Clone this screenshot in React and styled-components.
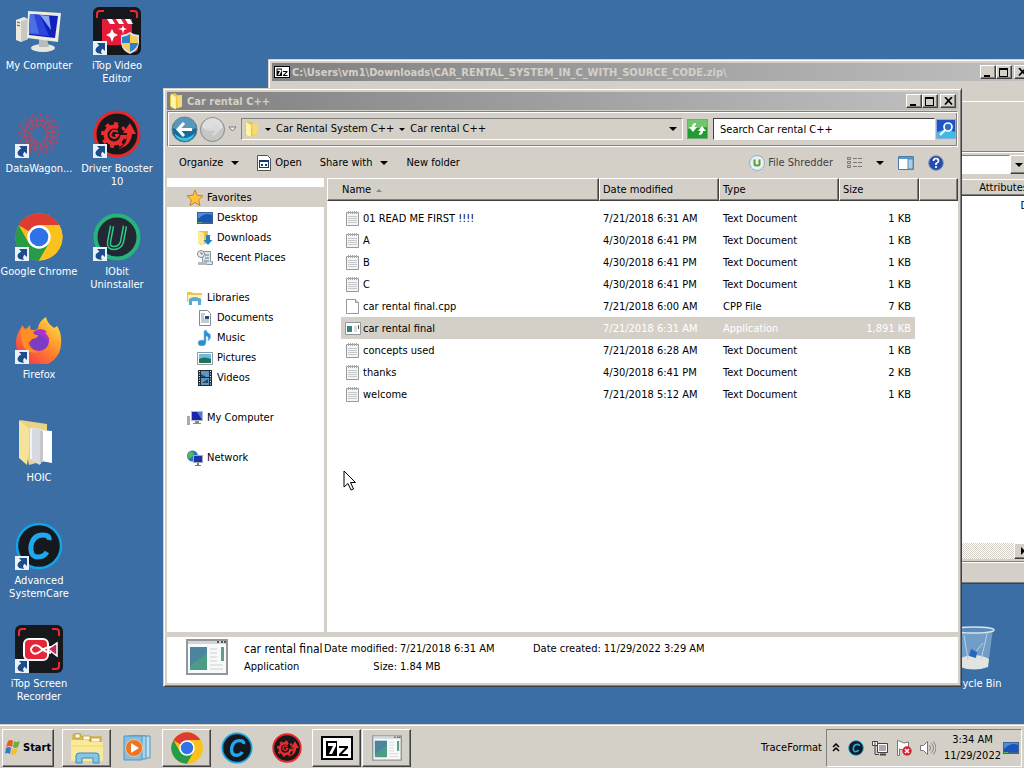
import React, { useState } from 'react';
import styled, { createGlobalStyle, css } from 'styled-components';

const GlobalStyle = createGlobalStyle`
    * {
        box-sizing: border-box;
    }
    body {
        margin: 0;
        overflow: hidden;
        font-family: "DejaVu Sans Condensed", "DejaVu Sans", sans-serif;
        font-size: 11px;
        line-height: 14px;
        color: #000;
    }
    button, input {
        font: inherit;
        color: inherit;
    }
    svg {
        display: block;
        flex: none;
    }
`;

const raised = css`
    border: 1px solid;
    border-color: #fff #404040 #404040 #fff;
    box-shadow: inset -1px -1px #808080;
`;
const sunken = css`
    border: 1px solid;
    border-color: #808080 #fff #fff #808080;
`;

const Screen = styled.div`
    display: flex;
    flex-direction: column;
    height: 100vh;
    background: #3a6ea5;
`;
const Desktop = styled.main`
    position: relative;
    flex: 1;
    min-height: 0;
    display: flex;
    justify-content: space-between;
    overflow: hidden;
`;
const Shortcuts = styled.div`
    display: grid;
    grid-auto-flow: column;
    grid-template-rows: repeat(7, 103px);
    grid-auto-columns: 78px;
    padding-top: 7px;
`;
const BinSlot = styled.div`
    width: 78px;
    margin: 625px 12px 0 0;
`;
const ShortcutButton = styled.button`
    display: flex;
    flex-direction: column;
    align-items: center;
    gap: 4px;
    width: 100%;
    padding: 0;
    border: none;
    background: none;
    color: #fff;
    line-height: 13px;
    white-space: pre-line;
`;
const IconBox = styled.span`
    position: relative;
    display: block;
`;
const ArrowBadge = styled.span`
    position: absolute;
    left: 0;
    bottom: 0;
`;

/* windows */
const Window = styled.section`
    position: absolute;
    display: flex;
    flex-direction: column;
    padding: 3px;
    background: #d4d0c8;
    border: 1px solid;
    border-color: #d4d0c8 #404040 #404040 #d4d0c8;
    box-shadow: inset 1px 1px #fff, inset -1px -1px #808080;
`;
const ArchiveWindow = styled(Window)`
    left: 268px;
    right: -12px;
    top: 59px;
    bottom: 140px;
`;
const ExplorerWindow = styled(Window)`
    left: 163px;
    right: 62px;
    top: 88px;
    bottom: 37px;
`;
const TitleBar = styled.header`
    display: flex;
    align-items: center;
    gap: 2px;
    height: 18px;
    padding: 0 2px;
    background: linear-gradient(90deg, #808080, #c0c0c0);
    color: #d4d0c8;
    font-weight: 700;
    white-space: nowrap;
`;
const Title = styled.h1`
    flex: 1;
    margin: 0;
    padding-top: 1px;
    font-size: 11px;
`;
const Caption = styled.button`
    display: grid;
    place-items: center;
    width: 16px;
    height: 14px;
    padding: 0;
    background: #d4d0c8;
    color: #000;
    ${raised}
    & + & {
        margin-left: -2px;
    }
    &&:last-child {
        margin-left: 0;
    }
`;

/* archive window parts */
const MenuBar = styled.nav`
    display: flex;
    gap: 12px;
    height: 20px;
    padding: 6px 5px 0;
`;
const ArchiveTools = styled.div`
    height: 51px;
    border-top: 1px solid #fff;
    border-bottom: 1px solid #808080;
`;
const ArchiveAddress = styled.div`
    display: flex;
    justify-content: flex-end;
    height: 24px;
    padding: 2px 4px 2px 0;
    border-top: 1px solid #fff;
`;
const ArchivePath = styled.input`
    flex: 1;
    min-width: 0;
    background: #fff;
    ${sunken}
`;
const SquareButton = styled.button`
    display: grid;
    place-items: center;
    width: 18px;
    padding: 0;
    background: #d4d0c8;
    ${raised}
`;
const ArchiveHead = styled.div`
    display: flex;
    justify-content: flex-end;
    align-items: center;
    height: 17px;
    margin-top: 3px;
    padding-right: 3px;
    ${raised}
`;
const ArchiveBody = styled.div`
    flex: 1;
    padding: 3px 4px;
    background: #fff;
    text-align: right;
`;
const ScrollTrack = styled.div`
    display: flex;
    justify-content: flex-end;
    height: 16px;
    background: repeating-conic-gradient(#d4d0c8 0 25%, #fff 0 50%) 0 0 / 2px 2px;
`;
const StatusBar = styled.footer`
    height: 19px;
    margin-top: 2px;
    border-top: 1px solid #808080;
    box-shadow: inset 0 1px #fff;
`;

/* explorer parts */
const AddressRow = styled.div`
    display: flex;
    align-items: center;
    height: 36px;
    margin-top: 1px;
    padding: 0 1px 0 3px;
    ${sunken}
    box-shadow: inset 1px 1px #fff, inset -1px -1px #808080;
`;
const NavButton = styled.button`
    padding: 0;
    border: none;
    background: none;
    margin-right: ${props => props.$gap || 0}px;
`;
const Breadcrumbs = styled.nav`
    flex: 1;
    display: flex;
    align-items: center;
    gap: 5px;
    height: 22px;
    margin: 0 4px;
    padding: 0 5px 0 2px;
    ${sunken}
`;
const Crumb = styled.button`
    display: flex;
    align-items: center;
    gap: 5px;
    padding: 0;
    border: none;
    background: none;
    white-space: nowrap;
    &:last-child {
        margin-left: auto;
    }
`;
const SearchInput = styled.input`
    width: 222px;
    height: 22px;
    margin: 0 1px 0 5px;
    padding: 0 6px;
    background: #fff;
    border: 1px solid;
    border-color: #404040 #fff #fff #404040;
    outline: none;
`;
const Toolbar = styled.div`
    display: flex;
    align-items: center;
    gap: 18px;
    height: 31px;
    padding: 0 14px 0 12px;
`;
const ToolButton = styled.button`
    display: flex;
    align-items: center;
    gap: ${props => props.$gap || 8}px;
    padding: 0;
    border: none;
    background: none;
    white-space: nowrap;
    color: ${props => (props.$muted ? '#404040' : '#000')};
`;
const ToolGroup = styled.div`
    display: flex;
    align-items: center;
    gap: 14px;
    margin-left: auto;
`;
const Panes = styled.div`
    flex: 1;
    min-height: 0;
    display: flex;
`;
const Sidebar = styled.aside`
    width: 160px;
    padding-top: 9px;
    background: #fff;
    border-right: 3px solid #d4d0c8;
`;
const SideGroup = styled.div`
    margin-bottom: 20px;
`;
const SideItem = styled.a`
    display: flex;
    align-items: center;
    gap: 4px;
    height: 20px;
    padding-top: 1px;
    padding-left: ${props => (props.$child ? 30 : 20)}px;
    background: ${props => (props.$active ? '#d4d0c8' : 'transparent')};
    color: #000;
    text-decoration: none;
`;
const FilePane = styled.div`
    flex: 1;
    min-width: 0;
    background: #fff;
`;
const Files = styled.table`
    width: 100%;
    table-layout: fixed;
    border-collapse: separate;
    border-spacing: 0;
    tbody::before {
        content: '';
        display: block;
        height: 6px;
    }
`;
const Column = styled.col`
    width: ${props => props.$width};
`;
const HeadCell = styled.th`
    height: 23px;
    padding: 1px 0 0 ${props => (props.$first ? 14 : 3)}px;
    background: #d4d0c8;
    text-align: left;
    font-weight: 400;
    ${raised}
`;
const BodyCell = styled.td`
    padding: 0;
`;
const CellText = styled.div`
    display: flex;
    align-items: center;
    gap: 2px;
    height: 22px;
    padding: 2px 4px 0;
    background: ${props => (props.$selected ? '#d4d0c8' : 'transparent')};
    color: ${props => (props.$selected && !props.$name ? '#fff' : '#000')};
    white-space: nowrap;
    ${props => props.$name && 'margin-left: 14px;'}
    ${props => props.$size && 'justify-content: flex-end; margin-right: 4px;'}
`;
const Details = styled.footer`
    display: flex;
    align-items: flex-start;
    gap: 16px;
    height: 51px;
    padding: 2px 19px;
    border-top: 5px solid #d4d0c8;
    background: #fff;
    line-height: 18px;
    white-space: nowrap;
`;
const DetailGrid = styled.dl`
    display: grid;
    grid-template-columns: 77px 73px 130px auto auto;
    column-gap: 3px;
    margin: 1px 0 0;
    dt {
        text-align: right;
    }
    dd {
        margin: 0;
    }
`;
const FileName = styled.dd`
    font-size: 12px;
`;
const Pointer = styled.div`
    position: absolute;
    left: 343px;
    top: 470px;
    pointer-events: none;
`;

/* taskbar */
const Taskbar = styled.footer`
    display: flex;
    align-items: center;
    height: 44px;
    padding: 2px 2px 0;
    background: #d4d0c8;
    border-top: 1px solid #d4d0c8;
    box-shadow: inset 0 1px #fff;
`;
const StartButton = styled.button`
    display: flex;
    align-items: center;
    gap: 2px;
    width: 52px;
    height: 38px;
    margin-right: 8px;
    padding: 0 2px;
    background: #d4d0c8;
    font-weight: 700;
    ${raised}
`;
const TaskButton = styled.button`
    display: grid;
    place-items: center;
    width: 49px;
    height: 38px;
    margin-right: 1px;
    padding: 0;
    background: #d4d0c8;
    border: none;
    ${props => props.$open && raised}
`;
const TrayLabel = styled.span`
    margin-left: auto;
`;
const Tray = styled.div`
    display: flex;
    align-items: center;
    gap: 8px;
    height: 38px;
    margin-left: 4px;
    padding: 0 2px 0 5px;
    ${sunken}
`;
const Clock = styled.time`
    text-align: center;
    line-height: 16px;
    white-space: nowrap;
`;
const DesktopPeek = styled.span`
    margin-left: -6px;
`;

/* small drawings */
const Caret = () => (
    <svg width="8" height="4" viewBox="0 0 8 4"><path d="M0 0h8L4 4z" /></svg>
);
const CrumbCaret = () => (
    <svg width="6" height="3" viewBox="0 0 6 3"><path d="M0 0h6L3 3z" /></svg>
);
const MinGlyph = () => (
    <svg width="10" height="9"><path d="M1 7h6v2H1z" /></svg>
);
const MaxGlyph = () => (
    <svg width="10" height="9"><path d="M0 0h9v9H0zM1 2v6h7V2z" fillRule="evenodd" /></svg>
);
const CloseGlyph = () => (
    <svg width="9" height="8"><path d="M1 0l7 7.5M8 0L1 7.5" stroke="#000" strokeWidth="1.7" /></svg>
);
const ShortcutArrow = () => (
    <svg width="14" height="14" viewBox="0 0 14 14">
        <path d="M0 0h14v14H0z" fill="#e8f1f7" />
        <path d="M4 2h8v8L9.500 7.800Q7 10 9 13 3 12.500 2.500 9.500 2.500 6.500 6.300 4.500z" fill="#1c4c8c" />
    </svg>
);

const Monitor = ({ size = 48 }) => (
    <svg width={size} height={size} viewBox="0 0 48 48">
        <path d="M1 13l8-3 4 2v20l-7 3-5-2z" fill="#ece9df" />
        <path d="M6 14l7-2v20l-7 3z" fill="#c9c8c2" />
        <path d="M2 15l3 1M2 18l3 1" stroke="#555" />
        <ellipse cx="28" cy="41" rx="12" ry="4" fill="#e6e6df" />
        <path d="M24 32h8l2 8H24z" fill="#b9bcb8" />
        <path d="M13 4l33 2-3 29-31-4z" fill="#ececdf" />
        <path d="M15 7l28 2-3 22-26-3z" fill="#1021bd" />
        <path d="M15 7l10 1 9 21-20-2z" fill="#2c46dc" />
        <path d="M25 8l9 1 2 14z" fill="#8aa6f2" />
        <path d="M15 7l4 0 5 20-10-1z" fill="#4c6fe6" />
    </svg>
);
const Corners = () => (
    <path d="M4 11V7q0-3 3-3h4M37 4h4q3 0 3 3v4M44 37v4q0 3-3 3h-4" fill="none" stroke="#ee2735" strokeWidth="2" />
);
const VideoEditor = () => (
    <svg width="48" height="48" viewBox="0 0 48 48">
        <rect width="48" height="48" rx="6" fill="#15171b" />
        <Corners />
        <path d="M9 18h30v20H9z" fill="#e51c39" />
        <path d="M9 12h30v6H9z" fill="#e51c39" />
        <path d="M14 12h5l3 5h-5zM23 12h5l3 5h-5zM32 12h5l3 5h-5z" fill="#fff" />
        <path d="M19 22l2 4 4 2-4 2-2 5-2-5-4-2 4-2zM30 18l1 3 3 1-3 1-1 4-1-4-4-1 4-1z" fill="#fff" />
        <path d="M37 25q4 3 9 3v8q-1 8-9 11-8-3-9-11v-8q5 0 9-3z" fill="#d9e4ec" />
        <path d="M37 27v9h-8v-6q4 0 8-3zM37 36h8q-1 6-8 9z" fill="#2e7fc8" />
        <path d="M37 27q4 3 8 3v6h-8zM29 36h8v9q-7-3-8-9z" fill="#f5cc4e" />
    </svg>
);
const rays = Array.from({ length: 16 }, (_, i) => i * 22.5);
const DataWagon = () => (
    <svg width="48" height="48" viewBox="0 0 48 48" fill="none" stroke="#a3506e">
        {rays.map(a => (
            <g key={a} transform={`rotate(${a} 24 24)`}>
                <path d="M24 17l4-6-3-7M24 17l-4-7 5-6M20 10l8 1" strokeWidth="0.7" />
                <circle cx="25" cy="4" r="1.300" fill="#b8455c" stroke="none" />
                <circle cx="28" cy="10" r="1.500" fill="#b8455c" stroke="none" />
                <circle cx="22" cy="14" r="1.200" fill="#b8455c" stroke="none" />
            </g>
        ))}
        <circle cx="24" cy="24" r="8" strokeDasharray="2 2" />
    </svg>
);
const DriverBooster = ({ size = 48 }) => (
    <svg width={size} height={size} viewBox="0 0 48 48">
        <circle cx="24" cy="24" r="22" fill="#18181b" stroke="#e5282e" strokeWidth="3" />
        <g fill="none" stroke="#ee2c2e">
            <circle cx="21" cy="25" r="8.500" strokeWidth="4" strokeDasharray="44 10" />
            <circle cx="21" cy="25" r="11.500" strokeWidth="3" strokeDasharray="4 5" />
            <path d="M25 22q-5-3-7 1t3 5q3 0 4-3h-3" strokeWidth="2" />
        </g>
        <path d="M25 39q10-4 9-16h-4l7-10 6 11h-4q-1 12-14 15z" fill="#ee2c2e" />
    </svg>
);
const Chrome = ({ size = 48 }) => (
    <svg width={size} height={size} viewBox="0 0 48 48">
        <circle cx="24" cy="24" r="23.500" fill="#f9bd1a" />
        <path d="M24 24L3.600 12.200A23.500 23.500 0 0 1 44.300 12.200H24z" fill="#df3b30" />
        <path d="M3.600 12.200A23.500 23.500 0 0 0 24 47.500L34.200 30 24 24 13.800 30z" fill="#289b46" />
        <path d="M24 12h20.300A23.500 23.500 0 0 1 24 47.500L34.300 30z" fill="#fbc21d" />
        <circle cx="24" cy="24" r="11.700" fill="#fff" />
        <circle cx="24" cy="24" r="9.300" fill="#2e73e8" />
    </svg>
);
const Uninstaller = () => (
    <svg width="48" height="48" viewBox="0 0 48 48">
        <circle cx="24" cy="24" r="21.500" fill="#222733" stroke="#25b57b" strokeWidth="4" />
        <path d="M19 13l-3 16q-1 6 5 6t8-6l3-16" fill="none" stroke="#29cc89" strokeWidth="4.500" />
        <path d="M19 13l-3 16q-1 6 5 6t8-6l3-16" fill="none" stroke="#222733" strokeWidth="1.500" />
    </svg>
);
const Firefox = () => (
    <svg width="48" height="48" viewBox="0 0 48 48">
        <defs>
            <linearGradient id="fox" x1="1" y1="0" x2="0.2" y2="1">
                <stop offset="0" stopColor="#fff14d" />
                <stop offset="0.500" stopColor="#ff8a2a" />
                <stop offset="1" stopColor="#f6324e" />
            </linearGradient>
        </defs>
        <path d="M31 1q1 6 8 11l3-2q5 7 4 18A22.500 22.500 0 0 1 1 27q0-9 5-15l1-3 3 4q3-1 5-4 0 5 2 5 6 0 6-2 1-7 8-11z" fill="url(#fox)" />
        <circle cx="24" cy="25" r="10" fill="#7c3bc5" />
        <path d="M18 16q8-6 14 0l-2 1q5 4 4 10-3-6-9-8z" fill="#a536c8" />
        <path d="M6 12l5 2q4-1 6 1 1 4 6 4 0 3-6 4-2 4-4 3 0 8 11 10-14 3-17-10-2-7-1-14z" fill="#ff8f25" />
    </svg>
);
const OpenFolder = () => (
    <svg width="48" height="48" viewBox="0 0 48 48">
        <path d="M5 1l27 4v36L14 46z" fill="#ead384" />
        <path d="M15 9l11 1v35l-11-5z" fill="#f1f2f3" />
        <path d="M17 10l8-1v37l-8-4z" fill="#d7dbe1" />
        <path d="M25 11l12 1v32l-11-2z" fill="#fff" />
        <path d="M25 11l3 1v31l-3 1z" fill="#c4c6c8" />
        <path d="M4 1l10 9v21l-2 15-8-7z" fill="#f5e39b" />
    </svg>
);
const SystemCare = ({ size = 48 }) => (
    <svg width={size} height={size} viewBox="0 0 48 48">
        <circle cx="24" cy="24" r="22" fill="#15191e" stroke="#14a3e5" strokeWidth="2.500" />
        <path d="M34 18q1-5-6-5-10 0-12 11-1 11 7 11 6 0 9-5" fill="none" stroke="#1ea8f0" strokeWidth="5" />
    </svg>
);
const ScreenRecorder = () => (
    <svg width="48" height="48" viewBox="0 0 48 48">
        <rect width="48" height="48" rx="6" fill="#17181c" />
        <Corners />
        <rect x="9" y="14" width="24" height="21" rx="5" fill="#e52638" stroke="#fff" strokeWidth="2" />
        <path d="M33 24l9-6v13z" fill="#c32a60" stroke="#fff" strokeWidth="1.500" />
        <path d="M36 22q-5 0-10 4t-8 2q-4-3 0-7 4-2 8 2t10 5" fill="none" stroke="#fff" strokeWidth="2" />
    </svg>
);
const RecycleBin = () => (
    <svg width="48" height="48" viewBox="0 0 48 48">
        <path d="M6 4h38l-5 37q-14 6-28 0z" fill="#7fa9cf" opacity="0.800" />
        <path d="M10 34q15-8 30 0l-1 8q-14 5-28 0z" fill="#e2e4df" />
        <path d="M15 10l4 25M38 9l-6 26M24 30l10-12" stroke="#b7d3e8" fill="none" />
        <path d="M22 24l6 3-1 6-7-2z" fill="#2367bf" />
        <ellipse cx="25" cy="5" rx="20" ry="3" fill="#5a8abb" stroke="#d7e2e9" strokeWidth="1.500" />
    </svg>
);
const SevenZip = ({ width, height }) => (
    <svg width={width} height={height} viewBox="0 0 32 24">
        <path d="M0 0h32v24H0z" />
        <path d="M2 2h28v20H2z" fill="#fff" />
        <path d="M5 5h11v15H5z" />
        <path d="M7 7h8v3l-4 8H8l4-8H7z" fill="#fff" />
        <path d="M18 10h9v2l-6 6h6v2h-9v-2l6-6h-6z" />
    </svg>
);
const FolderSmall = () => (
    <svg width="16" height="16" viewBox="0 0 16 16">
        <path d="M2 1l4-1 2 2h5v12l-8 2-4-3V3z" fill="#e8c84d" />
        <path d="M2 1l5 3v12l-5-2z" fill="#fff3a5" />
        <path d="M8 3l5-1v11l-4 2z" fill="#f5dc71" />
    </svg>
);
const BackIcon = () => (
    <svg width="27" height="27" viewBox="0 0 27 27">
        <circle cx="13.500" cy="13.500" r="12.500" fill="#176a9c" stroke="#667f91" />
        <path d="M2 12a11.500 11 0 0 1 23 0q-11 6-23 0z" fill="#5a97bb" />
        <path d="M3 17q10 10 21 0-3 8-10.500 8T3 17z" fill="#3bc0dd" />
        <path d="M13 7l-6 6.500 6 6.500M7 13.500h14" fill="none" stroke="#fff" strokeWidth="3" />
    </svg>
);
const ForwardIcon = () => (
    <svg width="27" height="27" viewBox="0 0 27 27">
        <circle cx="13.500" cy="13.500" r="12" fill="#c5c6c6" stroke="#888" />
        <path d="M3 12a10.500 10 0 0 1 21 0q-11 5-21 0z" fill="#dedede" />
        <path d="M14 8l6 5.500-6 5.500M20 13.500H7" fill="none" stroke="#d8d8d8" strokeWidth="2.500" />
    </svg>
);
const RefreshIcon = () => (
    <svg width="21" height="20" viewBox="0 0 21 20">
        <path d="M0 0h21v20H0z" fill="#7aa879" />
        <path d="M1 1h19v18H1z" fill="#1f9d30" />
        <path d="M1 1h19v7L1 10z" fill="#70c66d" />
        <path d="M9 4Q5 4 5 8H2l4 5 4-5H7.500Q7.500 6 9 6zM12 16q4 0 4-4h3l-4-5-4 5h2.500q0 2-1.500 2z" fill="#fff" />
    </svg>
);
const SearchIcon = () => (
    <svg width="20" height="20" viewBox="0 0 20 20">
        <path d="M0 0h20v20H0z" fill="#8badd8" />
        <path d="M1 1h18v18H1z" fill="#1d55c4" />
        <path d="M1 13q10-4 18 0v6H1z" fill="#40b9e5" />
        <circle cx="12" cy="8" r="4" fill="#2f6bd6" stroke="#fff" strokeWidth="1.700" />
        <path d="M9 11l-5 5" stroke="#fff" strokeWidth="2.200" />
    </svg>
);
const OpenIcon = () => (
    <svg width="14" height="16" viewBox="0 0 14 16">
        <path d="M.5.500h10l3 3v12H.5z" fill="#fff" stroke="#555" />
        <path d="M2 5h10v8H2z" fill="#16386f" />
        <path d="M3 7h8v5H3z" fill="#fff" />
        <path d="M4 9h2v2H4zM8 9h2v2H8z" fill="#16386f" />
    </svg>
);
const ShredIcon = () => (
    <svg width="16" height="16" viewBox="0 0 16 16">
        <circle cx="8" cy="8" r="7.500" fill="#e4f0f4" stroke="#8fb2c4" />
        <path d="M5.500 4.500V9q0 1.500 2.500 1.500T10.500 9V4.500" fill="none" stroke="#5e9b35" strokeWidth="2" />
    </svg>
);
const ViewIcon = () => (
    <svg width="15" height="12" viewBox="0 0 15 12" fill="none" stroke="#777">
        <path d="M.5.500h3v2h-3zM.5 4.500h3v2h-3zM.5 8.500h3v2h-3z" />
        <path d="M6 1.500h4M11 1.500h4M6 5.500h4M11 5.500h4M6 9.500h4M11 9.500h4" />
    </svg>
);
const PreviewIcon = () => (
    <svg width="16" height="14" viewBox="0 0 16 14">
        <path d="M.5.500h15v13H.5z" fill="#fff" stroke="#4b7caa" />
        <path d="M1 1h14v2H1z" fill="#5b97c4" />
        <path d="M10 3h5v10h-5z" fill="#a9d0e8" stroke="#5b8db4" />
    </svg>
);
const HelpIcon = () => (
    <svg width="16" height="16" viewBox="0 0 16 16">
        <circle cx="8" cy="8" r="7.300" fill="#274bac" stroke="#7990bd" />
        <path d="M5.500 6q0-2.500 2.500-2.500T10.500 6Q10.500 7.500 8 8.500V10M8 11v2" fill="none" stroke="#fff" strokeWidth="1.700" />
    </svg>
);
const AppIcon = ({ width, height }) => (
    <svg width={width} height={height} viewBox="0 0 42 36">
        <path d="M1 1h40v34H1z" fill="#f8f9f9" stroke="#92979b" strokeWidth="2" />
        <path d="M2 2h38v3H2z" fill="#d2d6d9" />
        <path d="M31 3h2M35 3h2M38 3h2" stroke="#555" strokeWidth="2" />
        <path d="M4 8h17v23H4z" fill="#4d9b87" />
        <path d="M4 8h17v6L4 27z" fill="#4a86a0" />
        <path d="M24 10h7M24 14h7M24 18h7M24 22h7M24 26h13M24 30h13" stroke="#cdd0d2" />
        <path d="M35 8h3v14h-3z" fill="#5c9f8d" />
    </svg>
);
const AppIconSmall = () => (
    <svg width="16" height="14" viewBox="0 0 16 14">
        <path d="M.5.500h15v12H.5z" fill="#fff" stroke="#92979b" />
        <path d="M2 4h5v6H2z" fill="#2f8577" />
        <path d="M9 5h3M9 7h3M9 9h3" stroke="#bbb" />
        <path d="M13 3h1v4h-1z" fill="#555" />
    </svg>
);
const TextFile = () => (
    <svg width="16" height="16" viewBox="0 0 16 16">
        <path d="M1.500 1.500h12v13h-12z" fill="#f4f5f5" stroke="#999" />
        <path d="M3.500 0v3M5.500 0v3M7.500 0v3M9.500 0v3M11.500 0v3" stroke="#aaa" />
        <path d="M3 5.500h9M3 7.500h9M3 9.500h9M3 11.500h9" stroke="#c4cacc" />
    </svg>
);
const BlankFile = () => (
    <svg width="16" height="16" viewBox="0 0 16 16">
        <path d="M1.500.500h9l3 3v11h-12z" fill="#fff" stroke="#999" />
        <path d="M10.500.500v3h3" fill="#ddd" stroke="#999" />
    </svg>
);
const DesktopIcon = () => (
    <svg width="16" height="16" viewBox="0 0 16 16">
        <path d="M0 2h16v12H0z" fill="#3b638d" />
        <path d="M1 3h14v9H1z" fill="#1b54b8" />
        <path d="M1 9q7-7 14-4V3H1z" fill="#4b8edb" />
        <path d="M1 12h4v1H1z" fill="#56b456" />
    </svg>
);

const sideIcons = {
    star: <path d="M8 0l2.200 5.300 5.800.500-4.300 4 1.300 5.700-5-3-5 3 1.300-5.700L0 5.800l5.800-.500z" fill="#ffc43a" stroke="#c7812e" />,
    downloads: (
        <>
            <path d="M1 1h10v12l-7 2-3-2z" fill="#e8bf55" />
            <path d="M1 1l6 2v12l-6-2z" fill="#ffec99" />
            <path d="M9 5h4v5h2.500L11 15l-4.500-5H9z" fill="#2580cc" />
        </>
    ),
    recent: (
        <>
            <path d="M5.500 1.500h8v10h2v3h-10z" fill="#dee5ea" stroke="#8b98a2" />
            <circle cx="4" cy="4" r="3.500" fill="#eee" stroke="#888" />
            <path d="M4 2v2h2M8 5h4M8 8h4M7 11h5" fill="none" stroke="#65788b" />
            <path d="M1 12h9v3H1z" fill="#b3bbc2" />
        </>
    ),
    libraries: (
        <>
            <path d="M0 2h5l1 1h9v9H0z" fill="#e8c659" />
            <path d="M1 5h14v7H1z" fill="#fff0ac" />
            <path d="M2 9q6-4 12 0v6h-3v-4H5v4H2z" fill="#58a9d7" />
        </>
    ),
    documents: (
        <>
            <path d="M2.500.500h8l3 3v12h-11z" fill="#fff" stroke="#7f8b96" />
            <path d="M4 4h4M4 6h3M4 8h3M4 10h8M4 12h8" stroke="#8897a5" />
            <path d="M8 6h4v3H8z" fill="#304a67" />
        </>
    ),
    music: <path d="M9 0q1 3 4 4 2 4-2 7 1-5-2-5v6q0 4-4 4t-4-3 4-3l2 .500V1z" fill="#298fd0" stroke="#7abce2" strokeWidth="0.600" />,
    pictures: (
        <>
            <path d="M.5 2.500h15v12H.5z" fill="#fff" stroke="#8e999f" />
            <path d="M2 4h12v9H2z" fill="#66bfe5" />
            <path d="M2 9q5-3 12 0v4H2z" fill="#24705b" />
        </>
    ),
    videos: (
        <>
            <path d="M1 0h14v16H1z" fill="#202832" />
            <path d="M4 1h8v6H4zM4 8h8v7H4z" fill="#5a98c3" />
            <path d="M2.500 1v14M13.500 1v14" stroke="#eee" strokeDasharray="1 1.500" />
            <path d="M4 4l5 3H4zM5 13l6-4v4z" fill="#274a65" />
        </>
    ),
    computer: (
        <>
            <path d="M0 6h3v9H0z" fill="#aaa" />
            <path d="M4 1h12v10H4z" fill="#b6bbc8" />
            <path d="M5 2h10v8H5z" fill="#1c27a8" />
            <path d="M10 2h5v8z" fill="#5474df" />
            <path d="M8 11h4v2h2v1H6v-1h2z" fill="#888" />
        </>
    ),
    network: (
        <>
            <circle cx="5.500" cy="6" r="5.500" fill="#2676c0" />
            <path d="M3 1l4 2-2 4-4 2-1-4zM7 5l3 2-2 4z" fill="#51b855" />
            <path d="M6 5h10v8H6z" fill="#a2adbc" />
            <path d="M7 6h8v6H7z" fill="#1b32ad" />
            <path d="M10 13h2v2h2v1H8v-1h2z" fill="#777" />
        </>
    ),
};

const TrayNetwork = () => (
    <svg width="16" height="16" viewBox="0 0 16 16">
        <path d="M5.500 3.500h10v9h-10z" fill="#aaa" stroke="#444" />
        <path d="M6.500 4.500h8v7h-8z" fill="none" stroke="#fff" />
        <path d="M8 14.500h6" stroke="#444" strokeWidth="2" />
        <path d="M.5 1.500h5v4h-5z" fill="#fff" stroke="#444" />
        <path d="M3 1v4M3 6v8.500h4" fill="none" stroke="#444" />
    </svg>
);
const TrayFlag = () => (
    <svg width="16" height="16" viewBox="0 0 16 16">
        <path d="M1.500.500v15h2V9l4 1 5-1V2L8 3 3.500 1z" fill="#fff" stroke="#777" />
        <circle cx="11" cy="11" r="4.700" fill="#d92332" />
        <path d="M9 9l4 4M13 9l-4 4" stroke="#fff" strokeWidth="1.500" />
    </svg>
);
const TraySpeaker = () => (
    <svg width="16" height="16" viewBox="0 0 16 16">
        <path d="M.5 5.500h3l4-4v13l-4-4h-3z" fill="#fff" stroke="#777" />
        <path d="M9.500 5q2 3 0 6M11.500 3q4 5 0 10M13.500 1.500q5 6.500 0 13" fill="none" stroke="#888" />
    </svg>
);
const WindowsFlag = () => (
    <svg width="16" height="15" viewBox="0 0 16 15">
        <path d="M3 1q3-2 5 0L7 7Q4 5 1 7z" fill="#e35c29" />
        <path d="M9 1q3 2 6 0l-2 6q-3 2-5 0z" fill="#72ae39" />
        <path d="M1 8q3-2 5 0l-1 6q-3-2-5 0z" fill="#3379c4" />
        <path d="M7 8q3 2 6 0l-2 6q-3 2-5 0z" fill="#f2c032" />
    </svg>
);
const ExplorerIcon = () => (
    <svg width="34" height="32" viewBox="0 0 34 32">
        <path d="M2 3l2-2h7l1 3h20v25H2z" fill="#dcb953" />
        <path d="M5 2h5v4H5zM13 4h7v4h-7zM21 6h9v4h-9z" fill="#fffbe0" stroke="#99853f" strokeWidth="0.600" />
        <path d="M1 8h17l2 2h13v19H1z" fill="#fae999" />
        <path d="M1 14h32" stroke="#f0d670" />
        <path d="M6 31v-7q0-3 3-3h17q3 0 3 3v7h-6v-5H12v5z" fill="#86c5e8" stroke="#388bc0" />
    </svg>
);
const MediaIcon = () => (
    <svg width="28" height="26" viewBox="0 0 28 26">
        <path d="M9 1h18v22H9z" fill="#c2e0ef" stroke="#4e95bf" />
        <path d="M5 1h18v23H5z" fill="#a6d4ec" stroke="#4e95bf" />
        <path d="M1 1h18v24H1z" fill="#83bfe1" stroke="#4e95bf" />
        <circle cx="11" cy="13" r="8.500" fill="#ed7424" stroke="#f8c99a" />
        <path d="M8 8l8 5-8 5z" fill="#fff" />
    </svg>
);

const shortcuts = [
    { label: 'My Computer', icon: <Monitor /> },
    { label: 'DataWagon...', icon: <DataWagon />, link: true },
    { label: 'Google Chrome', icon: <Chrome />, link: true },
    { label: 'Firefox', icon: <Firefox />, link: true },
    { label: 'HOIC', icon: <OpenFolder /> },
    { label: 'Advanced\nSystemCare', icon: <SystemCare />, link: true },
    { label: 'iTop Screen\nRecorder', icon: <ScreenRecorder />, link: true },
    { label: 'iTop Video\nEditor', icon: <VideoEditor />, link: true },
    { label: 'Driver Booster\n10', icon: <DriverBooster />, link: true },
    { label: 'IObit\nUninstaller', icon: <Uninstaller />, link: true },
];

const places = [
    [['star', 'Favorites'], ['desktop', 'Desktop'], ['downloads', 'Downloads'], ['recent', 'Recent Places']],
    [['libraries', 'Libraries'], ['documents', 'Documents'], ['music', 'Music'], ['pictures', 'Pictures'], ['videos', 'Videos']],
    [['computer', 'My Computer']],
    [['network', 'Network']],
];

const files = [
    ['01 READ ME FIRST !!!!', '7/21/2018 6:31 AM', 'Text Document', '1 KB'],
    ['A', '4/30/2018 6:41 PM', 'Text Document', '1 KB'],
    ['B', '4/30/2018 6:41 PM', 'Text Document', '1 KB'],
    ['C', '4/30/2018 6:41 PM', 'Text Document', '1 KB'],
    ['car rental final.cpp', '7/21/2018 6:00 AM', 'CPP File', '7 KB'],
    ['car rental final', '7/21/2018 6:31 AM', 'Application', '1,891 KB'],
    ['concepts used', '7/21/2018 6:28 AM', 'Text Document', '1 KB'],
    ['thanks', '4/30/2018 6:41 PM', 'Text Document', '2 KB'],
    ['welcome', '7/21/2018 5:12 AM', 'Text Document', '1 KB'],
];

const fileIcon = type => {
    if (type === 'Application') return <AppIconSmall />;
    if (type === 'CPP File') return <BlankFile />;
    return <TextFile />;
};

function Shortcut({ label, icon, link }) {
    return (
        <ShortcutButton>
            <IconBox>
                {icon}
                {link && <ArrowBadge><ShortcutArrow /></ArrowBadge>}
            </IconBox>
            {label}
        </ShortcutButton>
    );
}

function Captions() {
    return (
        <>
            <Caption aria-label="Minimize"><MinGlyph /></Caption>
            <Caption aria-label="Maximize"><MaxGlyph /></Caption>
            <Caption aria-label="Close"><CloseGlyph /></Caption>
        </>
    );
}

function Archive() {
    return (
        <ArchiveWindow>
            <TitleBar>
                <SevenZip width={16} height={12} />
                <Title>C:\Users\vm1\Downloads\CAR_RENTAL_SYSTEM_IN_C_WITH_SOURCE_CODE.zip\</Title>
                <Captions />
            </TitleBar>
            <MenuBar>
                {['File', 'Edit', 'View', 'Favorites', 'Tools', 'Help'].map(m => <span key={m}>{m}</span>)}
            </MenuBar>
            <ArchiveTools />
            <ArchiveAddress>
                <ArchivePath aria-label="Path" />
                <SquareButton aria-label="Show paths"><Caret /></SquareButton>
            </ArchiveAddress>
            <ArchiveHead>Attributes</ArchiveHead>
            <ArchiveBody>D</ArchiveBody>
            <ScrollTrack>
                <SquareButton aria-label="Scroll right">
                    <svg width="4" height="8"><path d="M0 0l4 4-4 4z" /></svg>
                </SquareButton>
            </ScrollTrack>
            <StatusBar />
        </ArchiveWindow>
    );
}

function FileTable({ selected, onSelect }) {
    return (
        <Files>
            <colgroup>
                <Column $width="272px" />
                <Column $width="120px" />
                <Column $width="120px" />
                <Column $width="80px" />
                <Column $width="auto" />
            </colgroup>
            <thead>
                <tr>
                    <HeadCell $first>
                        <ToolButton $gap={5}>
                            Name
                            <svg width="6" height="3"><path d="M0 3h6L3 0z" fill="#888" /></svg>
                        </ToolButton>
                    </HeadCell>
                    <HeadCell>Date modified</HeadCell>
                    <HeadCell>Type</HeadCell>
                    <HeadCell>Size</HeadCell>
                    <HeadCell />
                </tr>
            </thead>
            <tbody>
                {files.map(([name, date, type, size]) => {
                    const on = name === selected;
                    return (
                        <tr key={name} onClick={() => onSelect(name)}>
                            <BodyCell><CellText $name $selected={on}>{fileIcon(type)}{name}</CellText></BodyCell>
                            <BodyCell><CellText $selected={on}>{date}</CellText></BodyCell>
                            <BodyCell><CellText $selected={on}>{type}</CellText></BodyCell>
                            <BodyCell><CellText $size $selected={on}>{size}</CellText></BodyCell>
                            <BodyCell />
                        </tr>
                    );
                })}
            </tbody>
        </Files>
    );
}

function Explorer() {
    const [selected, setSelected] = useState('car rental final');
    const [query, setQuery] = useState('Search Car rental C++');

    return (
        <ExplorerWindow>
            <TitleBar>
                <FolderSmall />
                <Title>Car rental C++</Title>
                <Captions />
            </TitleBar>
            <AddressRow>
                <NavButton aria-label="Back" $gap={1}><BackIcon /></NavButton>
                <NavButton aria-label="Forward" $gap={2}><ForwardIcon /></NavButton>
                <NavButton aria-label="Recent pages">
                    <svg width="9" height="6"><path d="M1 1h7L4.500 5z" fill="#fff" stroke="#777" /></svg>
                </NavButton>
                <Breadcrumbs>
                    <FolderSmall />
                    <Crumb aria-label="Root"><CrumbCaret /></Crumb>
                    <Crumb>Car Rental System C++ <CrumbCaret /></Crumb>
                    <Crumb>Car rental C++</Crumb>
                    <Crumb aria-label="Previous locations"><Caret /></Crumb>
                </Breadcrumbs>
                <NavButton aria-label="Refresh"><RefreshIcon /></NavButton>
                <SearchInput aria-label="Search" value={query} onChange={e => setQuery(e.target.value)} />
                <NavButton aria-label="Go"><SearchIcon /></NavButton>
            </AddressRow>
            <Toolbar>
                <ToolButton>Organize <Caret /></ToolButton>
                <ToolButton $gap={4}><OpenIcon /> Open</ToolButton>
                <ToolButton>Share with <Caret /></ToolButton>
                <ToolButton>New folder</ToolButton>
                <ToolGroup>
                    <ToolButton $gap={3} $muted><ShredIcon /> File Shredder</ToolButton>
                    <ToolButton aria-label="Views" $gap={14}><ViewIcon /><Caret /></ToolButton>
                    <ToolButton aria-label="Preview pane"><PreviewIcon /></ToolButton>
                    <ToolButton aria-label="Help"><HelpIcon /></ToolButton>
                </ToolGroup>
            </Toolbar>
            <Panes>
                <Sidebar>
                    {places.map(group => (
                        <SideGroup key={group[0][1]}>
                            {group.map(([icon, label], i) => (
                                <SideItem key={label} href="#" $child={i > 0} $active={icon === 'star'}>
                                    {icon === 'desktop'
                                        ? <DesktopIcon />
                                        : <svg width="16" height="16" viewBox="0 0 16 16">{sideIcons[icon]}</svg>}
                                    {label}
                                </SideItem>
                            ))}
                        </SideGroup>
                    ))}
                </Sidebar>
                <FilePane>
                    <FileTable selected={selected} onSelect={setSelected} />
                </FilePane>
            </Panes>
            <Details>
                <AppIcon width={42} height={36} />
                <DetailGrid>
                    <FileName>car rental final</FileName>
                    <dt>Date modified:</dt>
                    <dd>7/21/2018 6:31 AM</dd>
                    <dt>Date created:</dt>
                    <dd>11/29/2022 3:29 AM</dd>
                    <dd>Application</dd>
                    <dt>Size:</dt>
                    <dd>1.84 MB</dd>
                </DetailGrid>
            </Details>
        </ExplorerWindow>
    );
}

function App() {
    return (
        <Screen>
            <GlobalStyle />
            <Desktop>
                <Shortcuts>
                    {shortcuts.map(s => <Shortcut key={s.label} {...s} />)}
                </Shortcuts>
                <BinSlot>
                    <Shortcut label="Recycle Bin" icon={<RecycleBin />} />
                </BinSlot>
                <Archive />
                <Explorer />
                <Pointer>
                    <svg width="14" height="22" viewBox="0 0 14 22">
                        <path d="M1 1v16l4-3.500 3 6.500 2.500-1L7.500 12.500h5z" fill="#fff" stroke="#000" />
                    </svg>
                </Pointer>
            </Desktop>
            <Taskbar>
                <StartButton><WindowsFlag /> Start</StartButton>
                <TaskButton $open aria-label="Explorer"><ExplorerIcon /></TaskButton>
                <TaskButton aria-label="Media Player"><MediaIcon /></TaskButton>
                <TaskButton $open aria-label="Chrome"><Chrome size={32} /></TaskButton>
                <TaskButton aria-label="SystemCare"><SystemCare size={32} /></TaskButton>
                <TaskButton aria-label="Driver Booster"><DriverBooster size={30} /></TaskButton>
                <TaskButton $open aria-label="7-Zip"><SevenZip width={32} height={24} /></TaskButton>
                <TaskButton $open aria-label="Application"><AppIcon width={30} height={26} /></TaskButton>
                <TrayLabel>TraceFormat</TrayLabel>
                <Tray>
                    <svg width="8" height="9" fill="none" stroke="#000" strokeWidth="1.500">
                        <path d="M1 4l3-3 3 3M1 8l3-3 3 3" />
                    </svg>
                    <SystemCare size={16} />
                    <TrayNetwork />
                    <TrayFlag />
                    <TraySpeaker />
                    <Clock>3:34 AM<br />11/29/2022</Clock>
                    <DesktopPeek><DesktopIcon /></DesktopPeek>
                </Tray>
            </Taskbar>
        </Screen>
    );
}

export default App;
